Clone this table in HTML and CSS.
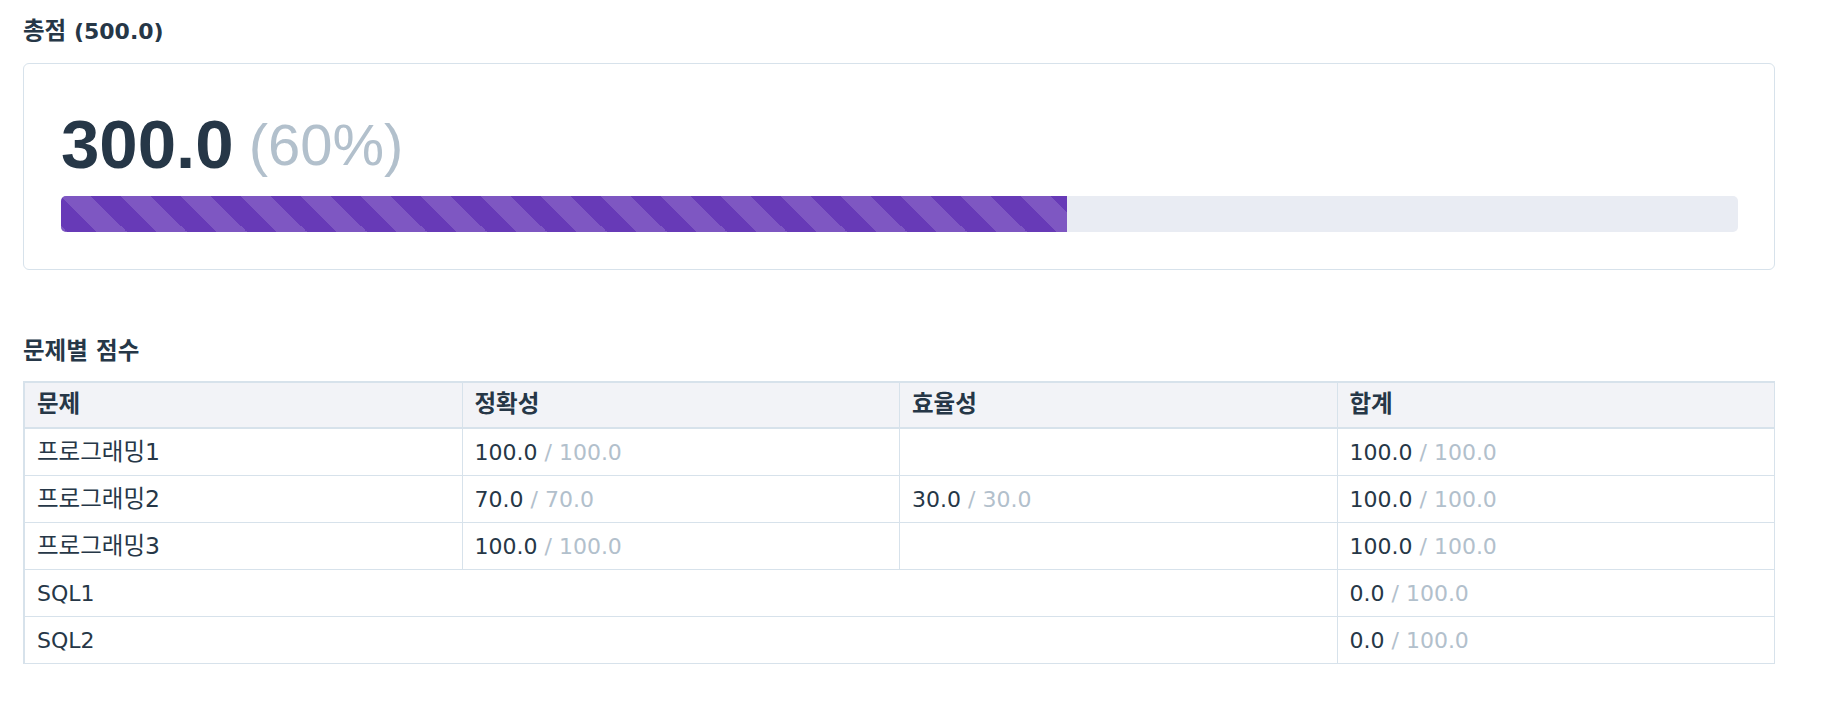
FILE: index.html
```html
<!DOCTYPE html>
<html lang="ko">
<head>
<meta charset="utf-8">
<title>점수</title>
<link rel="stylesheet" href="styles.css">
</head>
<body>
<div class="page">
  <h5 class="section-title"><span class="ko">총점</span> (500.0)</h5>
  <div class="score-card">
    <div class="score-line"><span class="score">300.0</span><span class="pct">(60%)</span></div>
    <div class="progress"><div class="progress-bar" style="width:60%"></div></div>
  </div>

  <h5 class="section-title section-gap ko">문제별 점수</h5>
  <table class="score-table">
    <colgroup>
      <col class="col"><col class="col"><col class="col"><col class="col">
    </colgroup>
    <thead>
      <tr><th>문제</th><th>정확성</th><th>효율성</th><th>합계</th></tr>
    </thead>
    <tbody>
      <tr>
        <td class="ko">프로그래밍1</td>
        <td>100.0 <span class="muted">/ 100.0</span></td>
        <td></td>
        <td>100.0 <span class="muted">/ 100.0</span></td>
      </tr>
      <tr>
        <td class="ko">프로그래밍2</td>
        <td>70.0 <span class="muted">/ 70.0</span></td>
        <td>30.0 <span class="muted">/ 30.0</span></td>
        <td>100.0 <span class="muted">/ 100.0</span></td>
      </tr>
      <tr>
        <td class="ko">프로그래밍3</td>
        <td>100.0 <span class="muted">/ 100.0</span></td>
        <td></td>
        <td>100.0 <span class="muted">/ 100.0</span></td>
      </tr>
      <tr>
        <td colspan="3">SQL1</td>
        <td>0.0 <span class="muted">/ 100.0</span></td>
      </tr>
      <tr>
        <td colspan="3">SQL2</td>
        <td>0.0 <span class="muted">/ 100.0</span></td>
      </tr>
    </tbody>
  </table>
</div>
</body>
</html>
```

FILE: styles.css
```css
body {
  margin: 0;
  background: #ffffff;
  color: #263747;
  font-family: "DejaVu Sans", "Noto Sans CJK KR", sans-serif;
  font-size: 22px;
  line-height: 33px;
}

.page {
  width: 1752px;
  padding: 15px 0 0 23px;
}

.section-title {
  margin: 0 0 15px;
  font-size: 22px;
  font-weight: 700;
  line-height: 33px;
  color: #263747;
}

.section-gap {
  margin-top: 65px;
  margin-bottom: 13px;
}

.score-card {
  box-sizing: border-box;
  width: 1752px;
  border: 1px solid #d7e2eb;
  border-radius: 6px;
  padding: 37px 36px 37px 37px;
}

.score-line {
  font-family: "Liberation Sans", Arial, sans-serif;
  line-height: 88px;
  height: 88px;
  white-space: nowrap;
}

.score {
  font-size: 69px;
  font-weight: 700;
  color: #263747;
}

.pct {
  font-size: 58px;
  color: #b2c0cc;
  margin-left: 15px;
  vertical-align: 3px;
}

.progress {
  margin-top: 7px;
  height: 36px;
  background: #e9ecf3;
  border-radius: 5px;
  overflow: hidden;
}

.progress-bar {
  height: 100%;
  background-color: #673ab7;
  background-image: linear-gradient(45deg,
    rgba(255, 255, 255, 0.15) 25%, transparent 25%,
    transparent 50%, rgba(255, 255, 255, 0.15) 50%,
    rgba(255, 255, 255, 0.15) 75%, transparent 75%, transparent);
  background-size: 60px 60px;
}

.score-table {
  width: 1752px;
  table-layout: fixed;
  border-collapse: separate;
  border-spacing: 0;
  border: 1px solid #d7e2eb;
}

.col {
  width: 25%;
}

.score-table th,
.score-table td {
  border-left: 1px solid #d7e2eb;
  border-top: 1px solid #d7e2eb;
  text-align: left;
  font-size: 22px;
  line-height: 33px;
  white-space: nowrap;
  color: #263747;
}

.score-table th {
  background: #f2f3f7;
  font-size: 23.5px;
  font-weight: 700;
  padding: 5px 12px 6px;
  border-bottom: 1px solid #d7e2eb;
}

.score-table td {
  padding: 7px 12px 6px;
  font-weight: 400;
}

.score-table td.ko,
.section-title.ko,
.ko {
  font-size: 23.5px;
}

.muted {
  color: #b2c0cc;
}
```
